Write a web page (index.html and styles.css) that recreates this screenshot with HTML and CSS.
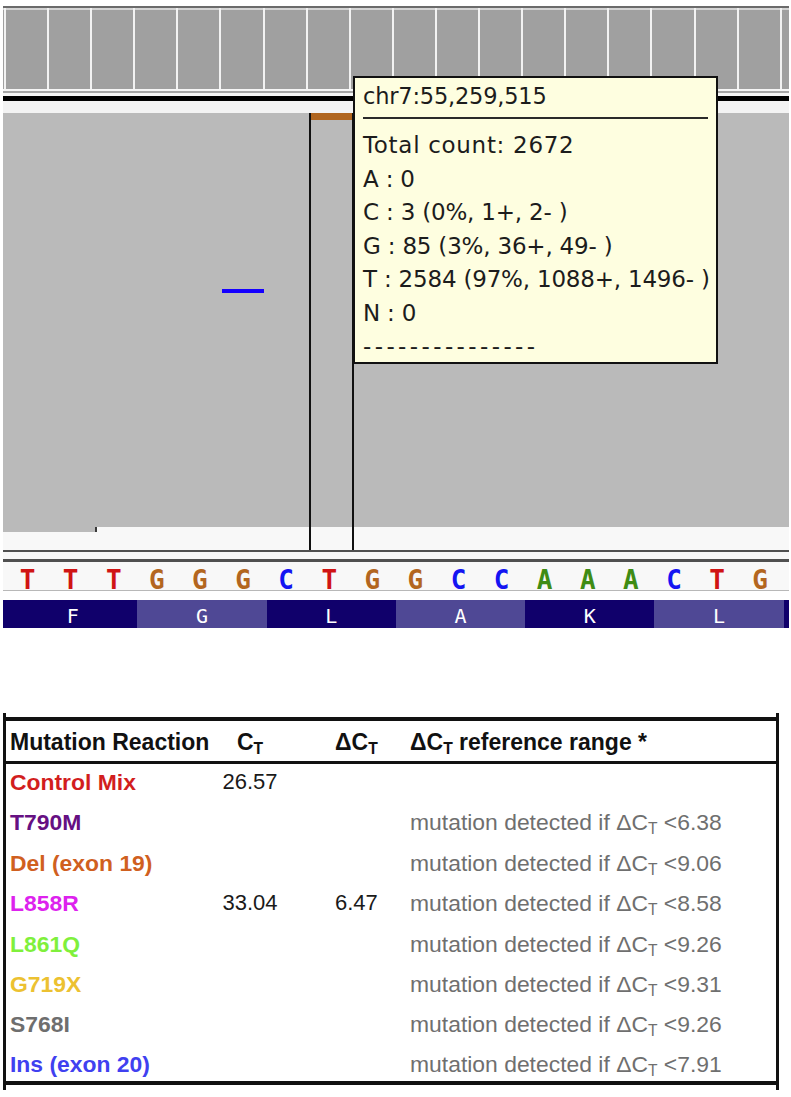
FILE: index.html
```html
<!DOCTYPE html>
<html lang="en">
<head>
<meta charset="utf-8">
<title>IGV EGFR L858R</title>
<link rel="stylesheet" href="styles.css">
</head>
<body>
<div class="igv">
  <div class="ruler">
    <span class="tick"></span><span class="tick"></span><span class="tick"></span><span class="tick"></span><span class="tick"></span><span class="tick"></span>
    <span class="tick"></span><span class="tick"></span><span class="tick"></span><span class="tick"></span><span class="tick"></span><span class="tick"></span>
    <span class="tick"></span><span class="tick"></span><span class="tick"></span><span class="tick"></span><span class="tick"></span><span class="tick"></span>
    <span class="tick tail"></span>
  </div>
  <div class="sep sep-white"></div>
  <div class="sep sep-gray"></div>
  <div class="sep sep-gap"></div>
  <div class="sep sep-black"></div>
  <div class="sep sep-light"></div>
  <div class="data">
    <div class="track"></div>
    <div class="strip"></div>
    <span class="mark"></span>
    <span class="vline vline-l"></span>
    <span class="vline vline-r"></span>
    <span class="cov-bar"></span>
    <span class="blue-dash"></span>
  </div>
  <div class="rule rule-a"></div>
  <div class="gap gap-a"></div>
  <div class="rule rule-b"></div>
  <div class="seq">
    <span class="b-t">T</span><span class="b-t">T</span><span class="b-t">T</span>
    <span class="b-g">G</span><span class="b-g">G</span><span class="b-g">G</span>
    <span class="b-c">C</span><span class="b-t">T</span><span class="b-g">G</span>
    <span class="b-g">G</span><span class="b-c">C</span><span class="b-c">C</span>
    <span class="b-a">A</span><span class="b-a">A</span><span class="b-a">A</span>
    <span class="b-c">C</span><span class="b-t">T</span><span class="b-g">G</span>
  </div>
  <div class="rule rule-c"></div>
  <div class="gap gap-b"></div>
  <div class="aa">
    <span class="cod dark">F</span>
    <span class="cod light">G</span>
    <span class="cod dark">L</span>
    <span class="cod light">A</span>
    <span class="cod dark">K</span>
    <span class="cod light">L</span>
  </div>
  <div class="tooltip">
    <div class="tt-title">chr7:55,259,515</div>
    <div class="tt-rule"></div>
    <div class="tt-line tt-wide">Total count: 2672</div>
    <div class="tt-line">A : 0</div>
    <div class="tt-line">C : 3 (0%, 1+, 2- )</div>
    <div class="tt-line">G : 85 (3%, 36+, 49- )</div>
    <div class="tt-line">T : 2584 (97%, 1088+, 1496- )</div>
    <div class="tt-line">N : 0</div>
    <div class="tt-line tt-dash">---------------</div>
  </div>
</div>

<div class="results">
  <table class="rtable">
    <colgroup>
      <col class="w1"><col class="w2"><col class="w3"><col class="w4">
    </colgroup>
    <thead>
      <tr>
        <th class="c1">Mutation Reaction</th>
        <th class="c2">C<sub>T</sub></th>
        <th class="c3">ΔC<sub>T</sub></th>
        <th class="c4">ΔC<sub>T</sub> reference range *</th>
      </tr>
    </thead>
    <tbody>
      <tr>
        <td class="c1 m-control">Control Mix</td>
        <td class="c2">26.57</td>
        <td class="c3"></td>
        <td class="c4"></td>
      </tr>
      <tr>
        <td class="c1 m-t790m">T790M</td>
        <td class="c2"></td>
        <td class="c3"></td>
        <td class="c4">mutation detected if ΔC<sub>T</sub> &lt;6.38</td>
      </tr>
      <tr>
        <td class="c1 m-del">Del (exon 19)</td>
        <td class="c2"></td>
        <td class="c3"></td>
        <td class="c4">mutation detected if ΔC<sub>T</sub> &lt;9.06</td>
      </tr>
      <tr>
        <td class="c1 m-l858r">L858R</td>
        <td class="c2">33.04</td>
        <td class="c3">6.47</td>
        <td class="c4">mutation detected if ΔC<sub>T</sub> &lt;8.58</td>
      </tr>
      <tr>
        <td class="c1 m-l861q">L861Q</td>
        <td class="c2"></td>
        <td class="c3"></td>
        <td class="c4">mutation detected if ΔC<sub>T</sub> &lt;9.26</td>
      </tr>
      <tr>
        <td class="c1 m-g719x">G719X</td>
        <td class="c2"></td>
        <td class="c3"></td>
        <td class="c4">mutation detected if ΔC<sub>T</sub> &lt;9.31</td>
      </tr>
      <tr>
        <td class="c1 m-s768i">S768I</td>
        <td class="c2"></td>
        <td class="c3"></td>
        <td class="c4">mutation detected if ΔC<sub>T</sub> &lt;9.26</td>
      </tr>
      <tr>
        <td class="c1 m-ins">Ins (exon 20)</td>
        <td class="c2"></td>
        <td class="c3"></td>
        <td class="c4">mutation detected if ΔC<sub>T</sub> &lt;7.91</td>
      </tr>
    </tbody>
  </table>
</div>
</body>
</html>
```

FILE: styles.css
```css
html, body {
  margin: 0;
  padding: 0;
  background: #ffffff;
}

body {
  font-family: "Liberation Sans", Arial, sans-serif;
  overflow: hidden;
}

/* ---------- IGV panel ---------- */
.igv {
  position: relative;
  width: 786px;
  margin-left: 3px;
  padding-top: 6px;
}

.ruler {
  display: flex;
  height: 81px;
  padding-left: 1px;
  border-top: 2px solid #6b6b6b;
  background: #a0a0a0;
  box-shadow: inset 0 2px 0 #d4d4d4;
}

.tick {
  flex: none;
  width: 43.1px;
  height: 100%;
  box-sizing: border-box;
  border-left: 2px solid #f2f2f2;
}

.tick.tail {
  flex: 1;
}

.sep { height: 2px; }
.sep-white { background: #f6f6f6; }
.sep-gray { background: #a6a6a6; }
.sep-gap { height: 3px; background: #f6f6f6; }
.sep-black { height: 5px; background: #000000; }
.sep-light { height: 12px; background: #f3f3f3; }

.data {
  position: relative;
}

.track {
  height: 414px;
  background: #bababa;
}

.strip {
  height: 23px;
  background: #f8f8f8;
}

.mark {
  position: absolute;
  left: 0;
  top: 414px;
  width: 92px;
  height: 5px;
  background: #bababa;
  border-right: 2px solid #3a3a3a;
}

.vline {
  position: absolute;
  top: 0;
  bottom: 0;
  width: 2px;
  background: #111111;
}

.vline-l { left: 306px; }
.vline-r { left: 349px; }

.cov-bar {
  position: absolute;
  left: 308px;
  top: 0;
  width: 41px;
  height: 7px;
  background: #b0651f;
}

.blue-dash {
  position: absolute;
  left: 219px;
  top: 176px;
  width: 42px;
  height: 4px;
  background: #1500ff;
}

.rule { background: #505050; }
.rule-a { height: 2px; }
.rule-b { height: 3px; }
.rule-c { height: 1px; background: #b8b8b8; }

.gap { background: #f8f8f8; }
.gap-a { height: 7px; }
.gap-b { height: 9px; background: #ffffff; }

.seq {
  display: grid;
  grid-template-columns: repeat(18, 43.1px);
  height: 28px;
  padding-left: 3px;
  background: #f8f8f8;
  font-family: "DejaVu Sans Mono", monospace;
  font-weight: bold;
  font-size: 26px;
  line-height: 37px;
  text-align: center;
}

.seq span {
  height: 28px;
  overflow: visible;
}

.b-t { color: #d01414; }
.b-g { color: #b3661f; }
.b-c { color: #1414f2; }
.b-a { color: #3f8c14; }

.aa {
  display: grid;
  grid-template-columns: repeat(6, 129.3px);
  height: 28px;
  padding-left: 5px;
  background: #10006b;
  font-family: "DejaVu Sans Mono", monospace;
  font-size: 20px;
  line-height: 33px;
  color: #ffffff;
  text-align: center;
}

.cod {
  height: 28px;
}

.cod.dark { background: #10006b; }
.cod.light { background: #4f4895; }

/* ---------- tooltip ---------- */
.tooltip {
  position: absolute;
  left: 350px;
  top: 76px;
  width: 365px;
  height: 288px;
  box-sizing: border-box;
  padding: 3px 8px 0 8px;
  border: 2px solid #111111;
  background: #fefee0;
  color: #1c1c1c;
  font-family: "DejaVu Sans", sans-serif;
}

.tt-title {
  font-size: 22.5px;
  line-height: 30px;
  letter-spacing: -0.2px;
}

.tt-rule {
  height: 2px;
  margin: 6px 0 10px;
  background: #2a2a2a;
}

.tt-line {
  font-size: 23px;
  line-height: 33.5px;
  letter-spacing: -0.2px;
  white-space: pre;
}

.tt-wide {
  letter-spacing: 0.7px;
}

.tt-dash {
  letter-spacing: 3.4px;
}

/* ---------- results table ---------- */
.results {
  width: 776px;
  margin: 85px 0 0 3px;
  padding: 4px 0 5px;
  box-sizing: border-box;
  border-left: 3px solid #111111;
  border-right: 3px solid #111111;
}

.rtable {
  width: 770px;
  table-layout: fixed;
  border-collapse: separate;
  border-spacing: 0;
}

.w1 { width: 209px; }
.w2 { width: 70px; }
.w3 { width: 112px; }
.w4 { width: 379px; }

.rtable th,
.rtable td {
  padding: 0;
  text-align: left;
  white-space: nowrap;
  vertical-align: top;
}

.rtable th {
  height: 36px;
  padding-top: 2px;
  line-height: 38px;
  font-size: 23px;
  font-weight: bold;
  color: #111111;
  border-top: 4px solid #111111;
  border-bottom: 3px solid #111111;
}

.rtable td {
  line-height: 36px;
  padding-bottom: 4.4px;
  font-size: 22px;
  color: #1a1a1a;
}

.rtable tbody tr:last-child td {
  line-height: 34px;
  padding-bottom: 0;
  border-bottom: 4px solid #111111;
}

.rtable .c1 { padding-left: 4px; }
.rtable .c2 { text-align: center; }
.rtable .c3 { padding-left: 50px; }
.rtable .c4 { padding-left: 13px; }

.rtable td.c1 {
  font-size: 22.9px;
  font-weight: bold;
}

.rtable td.c4 {
  font-size: 22.9px;
  color: #6f6f6f;
}

.rtable sub {
  font-size: 0.68em;
  line-height: 0;
  vertical-align: -0.28em;
}

.rtable td.m-control { color: #d21e1e; }
.rtable td.m-t790m { color: #661082; }
.rtable td.m-del { color: #d0601f; }
.rtable td.m-l858r { color: #dd22ee; }
.rtable td.m-l861q { color: #7ff03c; }
.rtable td.m-g719x { color: #ecc131; }
.rtable td.m-s768i { color: #6e6e6e; }
.rtable td.m-ins { color: #4040f0; }
```
